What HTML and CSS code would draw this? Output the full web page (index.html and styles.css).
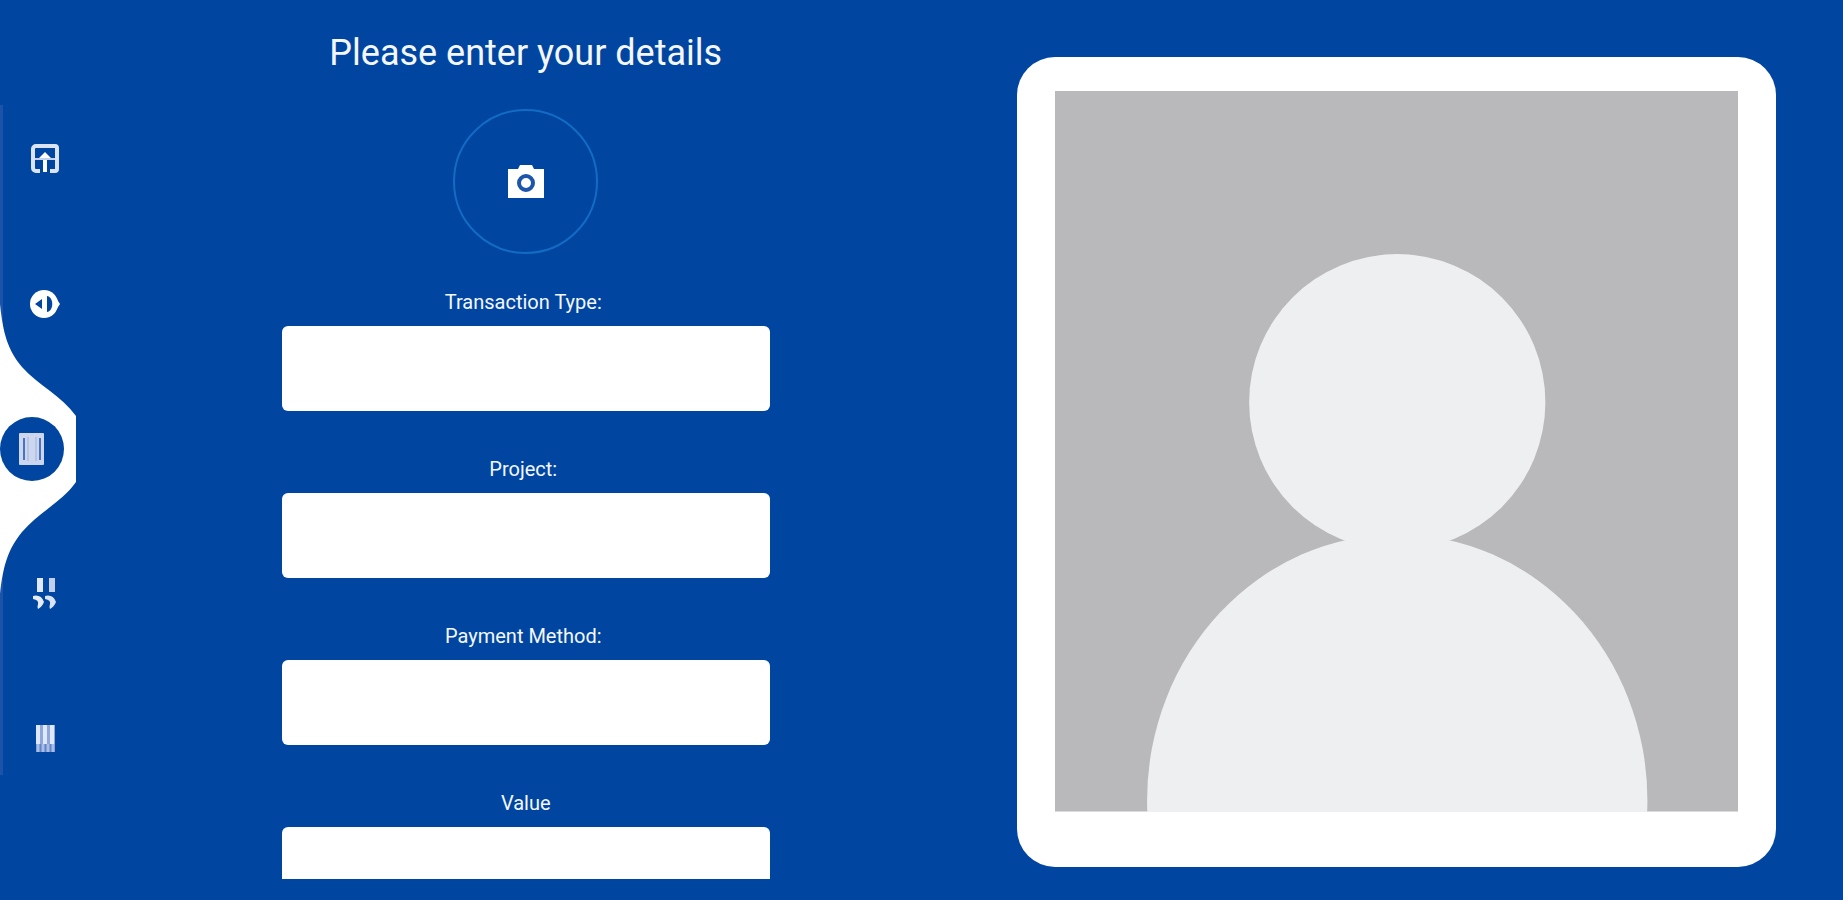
FILE: index.html
```html
<!DOCTYPE html>
<html lang="en">
<head>
    <meta charset="UTF-8">
    <meta name="viewport" content="width=device-width, initial-scale=1.0">
    <title>Please enter your details</title>
    <link rel="stylesheet" href="styles.css">
</head>
<body>
    <div class="page">
        <nav class="side-nav">
            <button type="button" class="nav-item" aria-label="Upload">
                <svg width="28" height="30" viewBox="0 0 28 30">
                    <path d="M9 27H5a3 3 0 0 1-3-3V5a3 3 0 0 1 3-3h19a2 2 0 0 1 2 2v21a2 2 0 0 1-2 2h-5" fill="none" stroke="#dbe4f7" stroke-width="4"/>
                    <path d="M14 8l7 7h-5v13h-4V15H7z" fill="#fff"/>
                    <path d="M4 15h20" stroke="#c5d2ee" stroke-width="2"/>
                </svg>
            </button>
            <button type="button" class="nav-item" aria-label="Contrast">
                <svg width="30" height="30" viewBox="0 0 30 30">
                    <circle cx="14" cy="15" r="14" fill="#fff"/>
                    <path d="M26 9l4 6-4 6z" fill="#fff"/>
                    <path d="M12 10v10l-7-5z" fill="#0045a0"/>
                    <path d="M17 7c7 1 7 15 0 16z" fill="#0045a0"/>
                </svg>
            </button>
            <button type="button" class="nav-item active" aria-label="Details">
                <svg class="nav-bump" width="80" height="290" viewBox="0 0 80 290">
                    <path d="M0 0C3 30 8 46 22 63C38 81 62 92 76 112V178C62 198 38 209 22 228C8 245 3 262 0 290z" fill="#fff"/>
                </svg>
                <span class="nav-circle">
                    <svg width="26" height="32" viewBox="0 0 26 32">
                        <rect width="25" height="32" rx="1" fill="#ccd7ef"/>
                        <path d="M5 5v22M21 5v22" stroke="#4a72bd" stroke-width="2"/>
                        <path d="M9 4v24M17 4v24" stroke="#b4c4e5" stroke-width="2"/>
                    </svg>
                </span>
            </button>
            <button type="button" class="nav-item" aria-label="Quotes">
                <svg width="24" height="32" viewBox="0 0 24 32">
                    <path d="M4 0h6v14H4z" fill="#e1e8f8"/>
                    <path d="M16 0h6v14h-6z" fill="#c3d0ed"/>
                    <path d="M0 18q8-2 11 6q-2 5-6 7q-1-2 0-5q1-4-5-5z" fill="#e6ecfa"/>
                    <path d="M12 18q8-2 11 6q-2 5-6 7q-1-2 0-5q1-4-5-5z" fill="#dbe4f7"/>
                </svg>
            </button>
            <button type="button" class="nav-item" aria-label="Barcode">
                <svg width="19" height="30" viewBox="0 0 19 30">
                    <path d="M0 1h19v19H0z" fill="#8fa8da"/>
                    <path d="M2 1v19M9 1v19M16 1v19" stroke="#dfe7f8" stroke-width="4"/>
                    <path d="M0 20h19v8H0z" fill="#5f84c8"/>
                    <path d="M2 20v8M7 20v8M12 20v8M17 20v8" stroke="#a9bce4" stroke-width="3"/>
                </svg>
            </button>
        </nav>

        <main class="form-panel">
            <h1>Please enter your details</h1>
            <button type="button" class="camera-button" aria-label="Take photo">
                <svg width="36" height="33" viewBox="0 0 36 33">
                    <path d="M0 4h10l2-4h12l2 4h10v29H0z" fill="#fff"/>
                    <circle cx="18" cy="18" r="7" fill="#fff" stroke="#1c56aa" stroke-width="4"/>
                </svg>
            </button>
            <form class="details-form">
                <div class="field">
                    <label for="transactionType">Transaction Type:&nbsp;</label>
                    <input type="text" id="transactionType" name="transactionType">
                </div>
                <div class="field">
                    <label for="project">Project:&nbsp;</label>
                    <input type="text" id="project" name="project">
                </div>
                <div class="field">
                    <label for="paymentMethod">Payment Method:&nbsp;</label>
                    <input type="text" id="paymentMethod" name="paymentMethod">
                </div>
                <div class="field">
                    <label for="value">Value</label>
                    <input type="text" id="value" name="value">
                </div>
            </form>
        </main>

        <section class="photo-panel">
            <div class="photo-card">
                <svg class="photo" viewBox="0 0 683 720">
                    <rect width="683" height="720" fill="#b9b9bb"/>
                    <circle cx="342" cy="311" r="148" fill="#edeff1"/>
                    <ellipse cx="342" cy="709" rx="250" ry="266" fill="#edeff1"/>
                </svg>
            </div>
        </section>
    </div>
</body>
</html>
```
FILE: styles.css
```css
:root {
    --bg-color: #0045a0;
    --ring-color: #136cc4;
    --text-color: #f4f7ff;
}

* {
    margin: 0;
    padding: 0;
    box-sizing: border-box;
}

body {
    font-family: Roboto, "Liberation Sans", sans-serif;
    background-color: var(--bg-color);
    color: var(--text-color);
}

.page {
    display: grid;
    grid-template-columns: 130px 1fr 50%;
    height: 100vh;
    overflow: hidden;
}

/* side navigation */
.side-nav {
    display: flex;
    flex-direction: column;
    justify-content: center;
    padding-bottom: 2px;
    background: linear-gradient(#1c52a8, #1c52a8) 0 105px / 3px 670px no-repeat;
}

.nav-item {
    position: relative;
    display: flex;
    align-items: center;
    justify-content: center;
    width: 90px;
    height: 145px;
    border: none;
    background: none;
    cursor: pointer;
}

.nav-item.active {
    justify-content: flex-start;
}

.nav-bump {
    position: absolute;
    left: 0;
    top: 50%;
    transform: translateY(-50%);
}

.nav-circle {
    position: relative;
    display: flex;
    align-items: center;
    justify-content: center;
    width: 64px;
    height: 64px;
    border-radius: 50%;
    background: var(--bg-color);
}

/* form */
.form-panel {
    display: flex;
    flex-direction: column;
    align-items: center;
    gap: 36px;
    margin-bottom: 21px;
    padding: 33px 24px 0;
    overflow-y: auto;
    scrollbar-width: none;
}

h1 {
    font-size: 36px;
    font-weight: 400;
    line-height: 40px;
    text-align: center;
}

.camera-button {
    display: flex;
    flex-shrink: 0;
    align-items: center;
    justify-content: center;
    width: 145px;
    height: 145px;
    border: 2px solid var(--ring-color);
    border-radius: 50%;
    background: none;
    cursor: pointer;
}

.details-form {
    display: flex;
    flex-direction: column;
    gap: 46px;
    width: 100%;
    max-width: 488px;
}

.field {
    display: flex;
    flex-direction: column;
    gap: 12px;
}

label {
    font-size: 20px;
    line-height: 24px;
    text-align: center;
}

input {
    width: 100%;
    height: 85px;
    padding: 0 16px;
    border: none;
    border-radius: 6px;
    background: #fff;
    font-family: inherit;
    font-size: 20px;
}

/* photo */
.photo-panel {
    padding: 57px 67px 0 95px;
}

.photo-card {
    padding: 34px 38px 55px;
    border-radius: 38px;
    background: #fff;
}

.photo {
    display: block;
    width: 100%;
    height: auto;
}
```
